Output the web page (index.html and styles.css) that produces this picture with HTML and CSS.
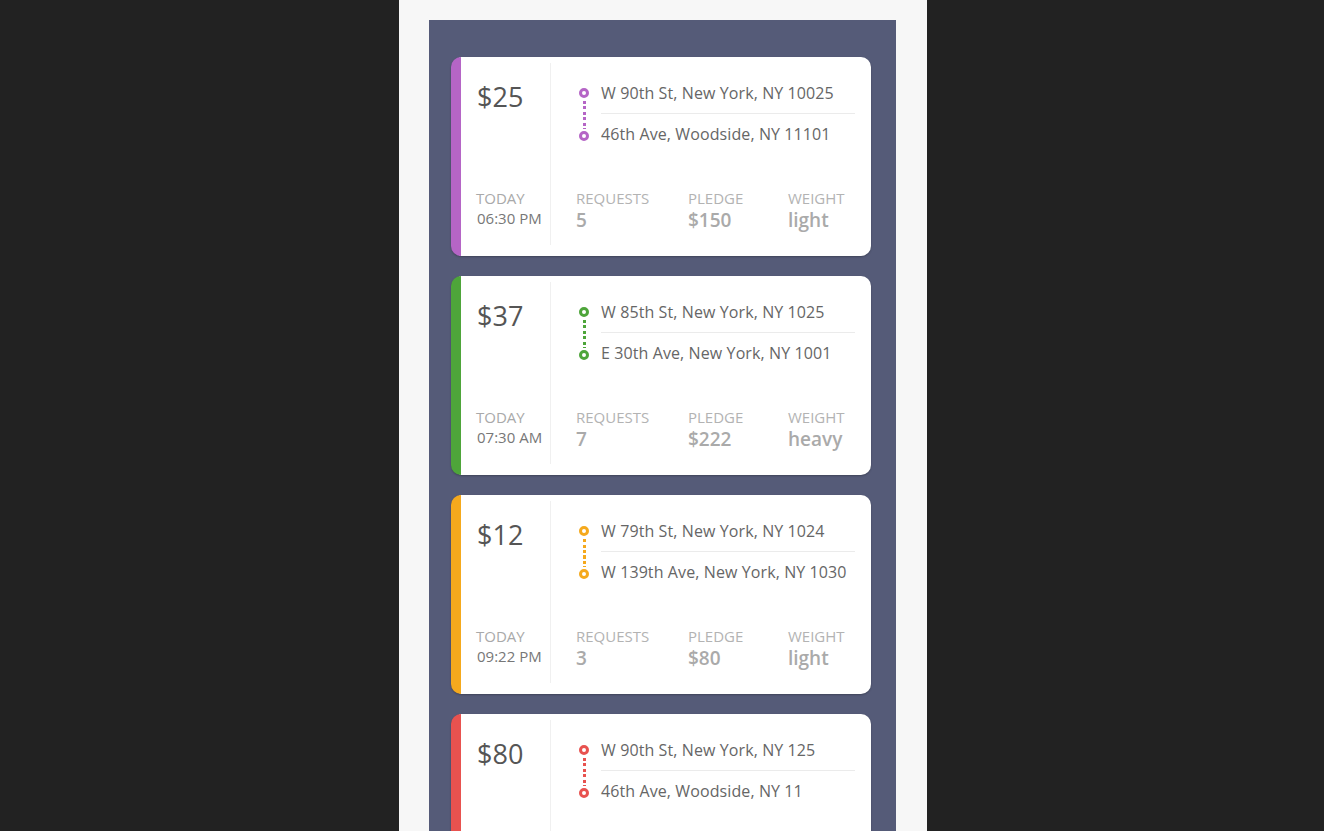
FILE: index.html
```html
<!DOCTYPE html>
<html>
<head>
<meta charset="utf-8">
<link rel="stylesheet" href="styles.css">
</head>
<body>
<div class="phone">
  <div class="list">
    <div class="card purple">
      <div class="left">
        <div class="price">$25</div>
        <div class="when"><div class="day">TODAY</div><div class="time">06:30 PM</div></div>
      </div>
      <div class="right">
        <div class="route">
          <div class="pins"><span class="pin"></span><span class="dots"></span><span class="pin pin-end"></span></div>
          <div class="addrs">
            <div class="addr first">W 90th St, New York, NY 10025</div>
            <div class="addr">46th Ave, Woodside, NY 11101</div>
          </div>
        </div>
        <div class="stats">
          <div class="stat s1"><div class="label">REQUESTS</div><div class="value">5</div></div>
          <div class="stat s2"><div class="label">PLEDGE</div><div class="value">$150</div></div>
          <div class="stat s3"><div class="label">WEIGHT</div><div class="value">light</div></div>
        </div>
      </div>
    </div>
    <div class="card green">
      <div class="left">
        <div class="price">$37</div>
        <div class="when"><div class="day">TODAY</div><div class="time">07:30 AM</div></div>
      </div>
      <div class="right">
        <div class="route">
          <div class="pins"><span class="pin"></span><span class="dots"></span><span class="pin pin-end"></span></div>
          <div class="addrs">
            <div class="addr first">W 85th St, New York, NY 1025</div>
            <div class="addr">E 30th Ave, New York, NY 1001</div>
          </div>
        </div>
        <div class="stats">
          <div class="stat s1"><div class="label">REQUESTS</div><div class="value">7</div></div>
          <div class="stat s2"><div class="label">PLEDGE</div><div class="value">$222</div></div>
          <div class="stat s3"><div class="label">WEIGHT</div><div class="value">heavy</div></div>
        </div>
      </div>
    </div>
    <div class="card yellow">
      <div class="left">
        <div class="price">$12</div>
        <div class="when"><div class="day">TODAY</div><div class="time">09:22 PM</div></div>
      </div>
      <div class="right">
        <div class="route">
          <div class="pins"><span class="pin"></span><span class="dots"></span><span class="pin pin-end"></span></div>
          <div class="addrs">
            <div class="addr first">W 79th St, New York, NY 1024</div>
            <div class="addr">W 139th Ave, New York, NY 1030</div>
          </div>
        </div>
        <div class="stats">
          <div class="stat s1"><div class="label">REQUESTS</div><div class="value">3</div></div>
          <div class="stat s2"><div class="label">PLEDGE</div><div class="value">$80</div></div>
          <div class="stat s3"><div class="label">WEIGHT</div><div class="value">light</div></div>
        </div>
      </div>
    </div>
    <div class="card red">
      <div class="left">
        <div class="price">$80</div>
        <div class="when"><div class="day">TODAY</div><div class="time">10:15 PM</div></div>
      </div>
      <div class="right">
        <div class="route">
          <div class="pins"><span class="pin"></span><span class="dots"></span><span class="pin pin-end"></span></div>
          <div class="addrs">
            <div class="addr first">W 90th St, New York, NY 125</div>
            <div class="addr">46th Ave, Woodside, NY 11</div>
          </div>
        </div>
        <div class="stats">
          <div class="stat s1"><div class="label">REQUESTS</div><div class="value">2</div></div>
          <div class="stat s2"><div class="label">PLEDGE</div><div class="value">$95</div></div>
          <div class="stat s3"><div class="label">WEIGHT</div><div class="value">light</div></div>
        </div>
      </div>
    </div>
  </div>
</div>
</body>
</html>
```
FILE: styles.css
```css
html, body {
  margin: 0;
  padding: 0;
  height: 100%;
  overflow: hidden;
}
body {
  background: #222222;
  font-family: "Open Sans", "Noto Sans", sans-serif;
}
.phone {
  width: 528px;
  margin-left: 399px;
  height: 100%;
  box-sizing: border-box;
  background: #f7f7f7;
  padding: 20px 31px 0 30px;
}
.list {
  background: #555b78;
  height: 100%;
  box-sizing: border-box;
  padding: 37px 25px 0 22px;
}
.card {
  --c: #b565c6;
  display: flex;
  height: 199px;
  box-sizing: border-box;
  background: #ffffff;
  border-radius: 10px;
  border-left: 10px solid var(--c);
  padding: 6px 0 11px;
  margin-bottom: 20px;
  box-shadow: 0 1px 2px rgba(0, 0, 0, 0.25);
}
.purple { --c: #b565c6; }
.green { --c: #4ea53a; }
.yellow { --c: #f5a91d; }
.red { --c: #e8524f; }

.left {
  width: 90px;
  flex: none;
  box-sizing: border-box;
  border-right: 1px solid #f0f0f0;
  padding: 16px 0 17px 16px;
  display: flex;
  flex-direction: column;
  justify-content: space-between;
}
.price {
  font-size: 27px;
  line-height: 36px;
  color: #555555;
}
.day {
  font-size: 15px;
  line-height: 20px;
  color: #a9a9a9;
  margin-left: -1px;
}
.time {
  font-size: 15px;
  line-height: 20px;
  color: #777777;
}
.right {
  flex: 1;
  padding: 20px 16px 13px 0;
  display: flex;
  flex-direction: column;
  justify-content: space-between;
}
.route {
  display: flex;
  padding-left: 28px;
}
.pins {
  width: 10px;
  flex: none;
  display: flex;
  flex-direction: column;
  align-items: center;
  height: 58px;
}
.pin {
  width: 10px;
  height: 10px;
  box-sizing: border-box;
  border: 3px solid var(--c);
  border-radius: 50%;
  margin-top: 5px;
  flex: none;
}
.pin-end {
  margin-top: 0;
}
.dots {
  flex: 1;
  width: 3px;
  margin: 3px 0 2px;
  background: repeating-linear-gradient(to bottom, var(--c) 0, var(--c) 3px, transparent 3px, transparent 5.5px);
}
.addrs {
  flex: 1;
  margin-left: 12px;
}
.addr {
  font-size: 16px;
  line-height: 20px;
  color: #666666;
  letter-spacing: 0.1px;
}
.addr.first {
  padding-bottom: 10px;
  border-bottom: 1px solid #ebebeb;
  margin-bottom: 10px;
}
.stats {
  display: flex;
  padding-left: 25px;
}
.s1 { width: 112px; }
.s2 { width: 100px; }
.label {
  font-size: 15px;
  line-height: 20px;
  color: #b3b3b3;
}
.value {
  font-size: 19px;
  line-height: 24px;
  font-weight: 600;
  color: #aaaaaa;
}
```
